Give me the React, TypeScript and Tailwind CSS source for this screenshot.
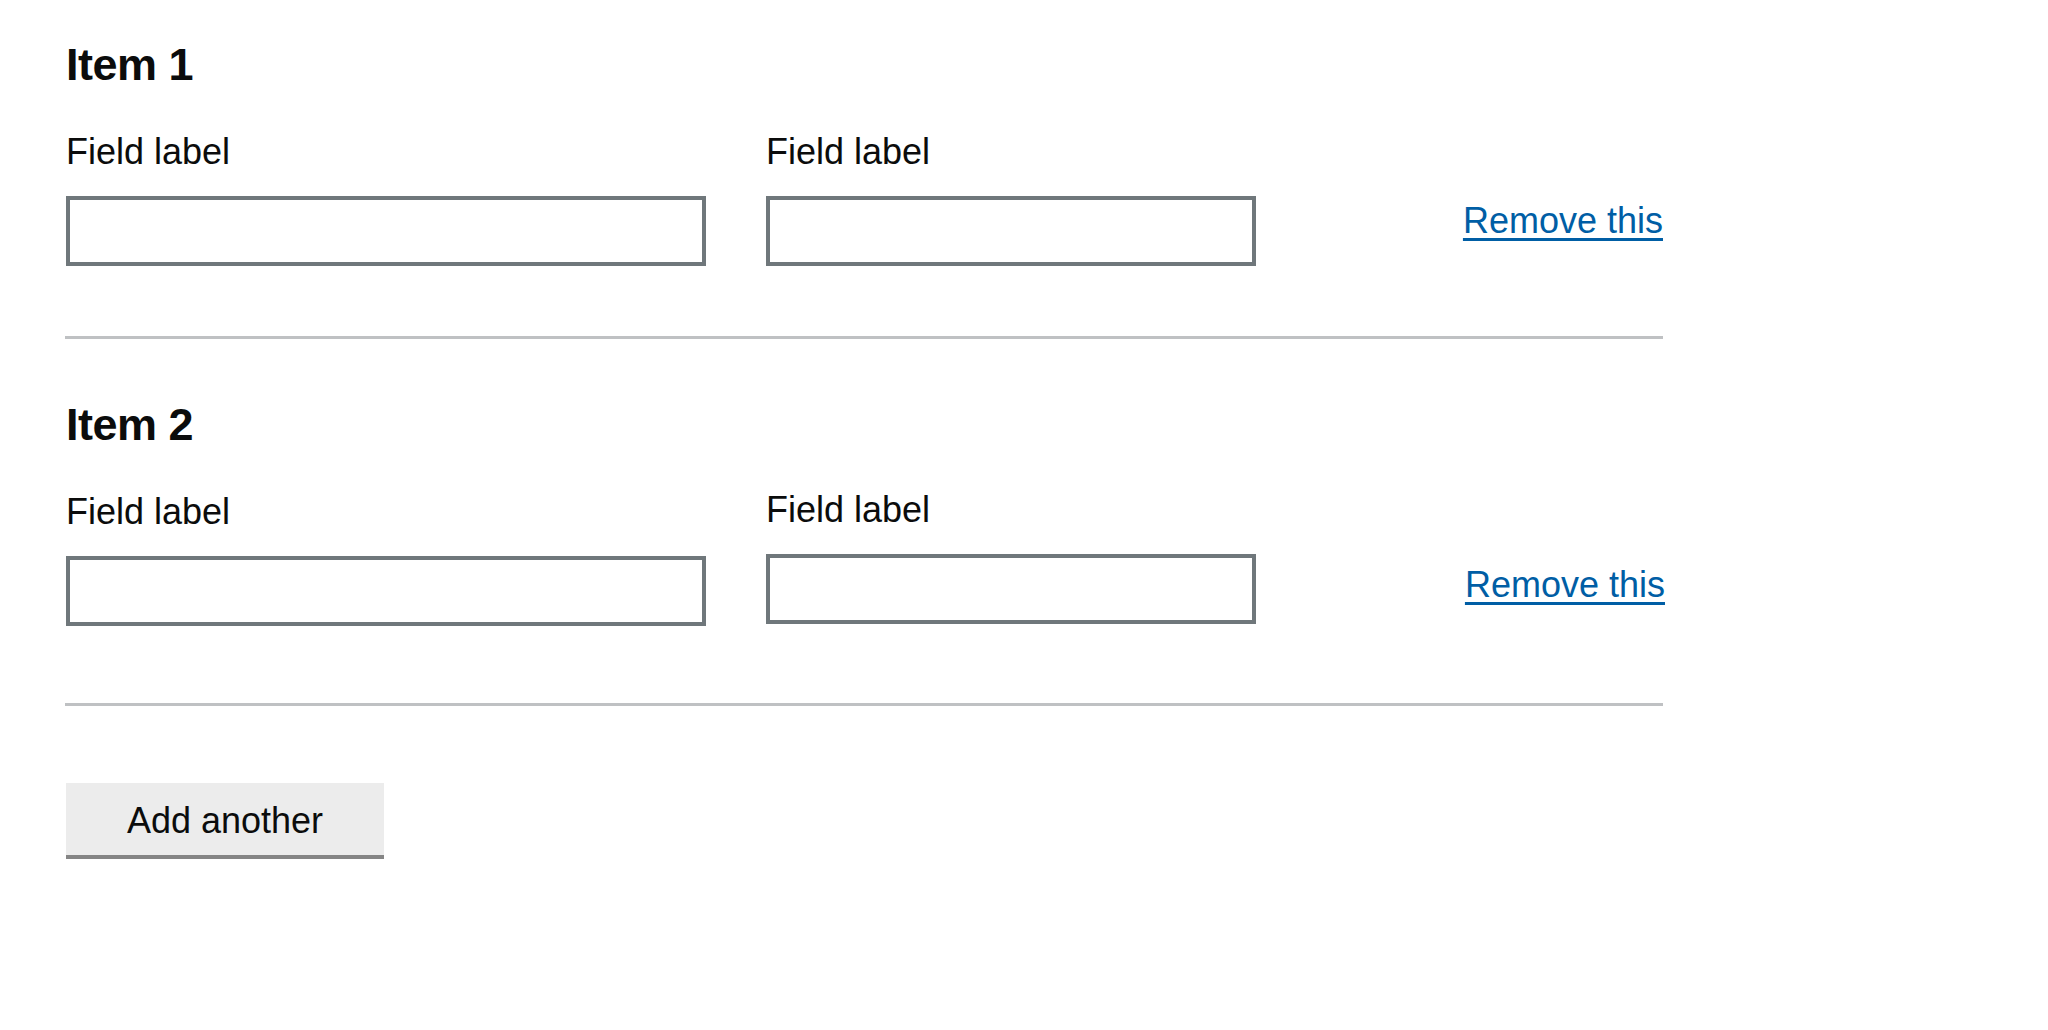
const font = "font-['Liberation_Sans',Arial,sans-serif]";

type FieldProps = { className: string };

const Field = ({ className }: FieldProps) => (
    <div className={`flex flex-col ${className}`}>
        <label className="block text-[36px] leading-[40px] mb-[24px]">Field label</label>
        <input
            type="text"
            className="h-[70px] w-full border-4 border-[#6f777b] bg-white outline-none"
        />
    </div>
);

type ItemProps = {
    title: string;
    last?: boolean;
};

const Item = ({ title, last }: ItemProps) => (
    <div
        className={`border-b-[3px] border-[#bfc1c3] ${last ? 'pb-[77px] mt-[61px]' : 'pb-[70px]'}`}
    >
        <div className="pl-px">
            <h2 className="text-[45px] leading-[50px] font-bold tracking-[-0.5px] mb-[42px]">
                {title}
            </h2>
            <div className="flex items-start">
                <Field className="w-[640px]" />
                <Field className={`w-[490px] ml-[60px] ${last ? '-mt-[2px]' : ''}`} />
                <a
                    href="#"
                    className={`ml-auto text-[36px] leading-[40px] text-[#005ea5] underline decoration-[3px] underline-offset-[5px] ${
                        last ? 'mt-[73px] -mr-[2px]' : 'mt-[69px]'
                    }`}
                >
                    Remove this
                </a>
            </div>
        </div>
    </div>
);

export default function App() {
    return (
        <div className={`min-h-screen bg-white pl-[65px] pt-[40px] text-[#0b0c0c] ${font}`}>
            <div className="w-[1598px]">
                <Item title="Item 1" />
                <Item title="Item 2" last />
                <div className="pl-px mt-[77px]">
                    <button
                        type="button"
                        className="w-[318px] bg-[#ececec] pt-[18px] pb-[14px] text-[36px] leading-[40px] text-[#0b0c0c] shadow-[0_4px_0_#858585]"
                    >
                        Add another
                    </button>
                </div>
            </div>
        </div>
    );
}
